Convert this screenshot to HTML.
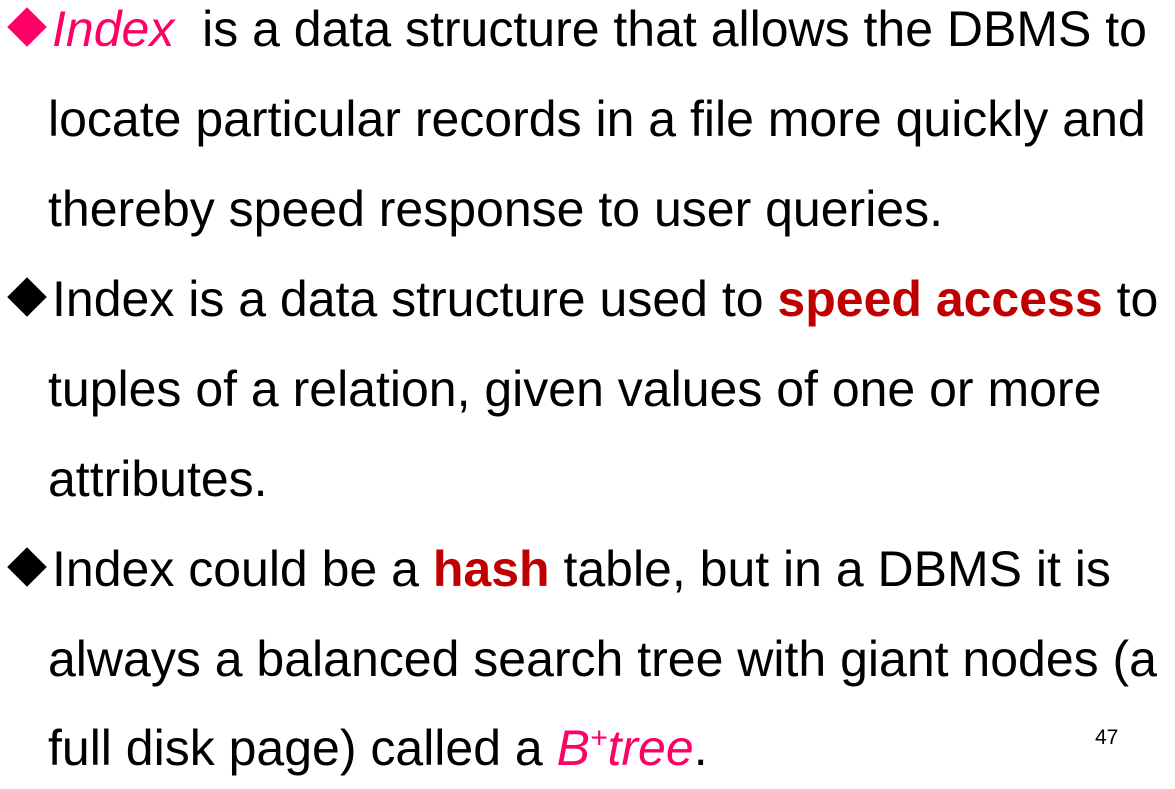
<!DOCTYPE html>
<html><head><style>
body{margin:0;width:1175px;height:789px;background:#fff;position:relative;overflow:hidden;font-family:"Liberation Sans",Arial,sans-serif;}
.l{position:absolute;left:48px;font-size:50px;line-height:50px;white-space:nowrap;color:#000;}
.b{left:6px}
.p{color:#ff0066;font-style:italic}
.r{color:#c00000;font-weight:bold}
.d{display:inline-block;width:28px;height:28px;transform:rotate(45deg);margin:0 11px 0 7px;vertical-align:5px}
</style></head><body>
<div class="l b" style="top:4px"><span class="d" style="background:#ff0066"></span><span class="p">Index</span>&nbsp; is a data structure that allows the DBMS to</div>
<div class="l" style="top:94px">locate particular records in a file more quickly and</div>
<div class="l" style="top:184px">thereby speed response to user queries.</div>
<div class="l b" style="top:274px"><span class="d" style="background:#000"></span>Index is a data structure used to <span class="r">speed access</span> to</div>
<div class="l" style="top:364px">tuples of a relation, given values of one or more</div>
<div class="l" style="top:454px">attributes.</div>
<div class="l b" style="top:544px"><span class="d" style="background:#000"></span>Index could be a <span class="r">hash</span> table, but in a DBMS it is</div>
<div class="l" style="top:634px">always a balanced search tree with giant nodes (a</div>
<div class="l" style="top:723px">full disk page) called a <span class="p">B<sup style="font-size:30px;line-height:0">+</sup>tree</span>.</div>
<div style="position:absolute;left:1095px;top:727px;font-size:21px;line-height:21px">47</div>
</body></html>
